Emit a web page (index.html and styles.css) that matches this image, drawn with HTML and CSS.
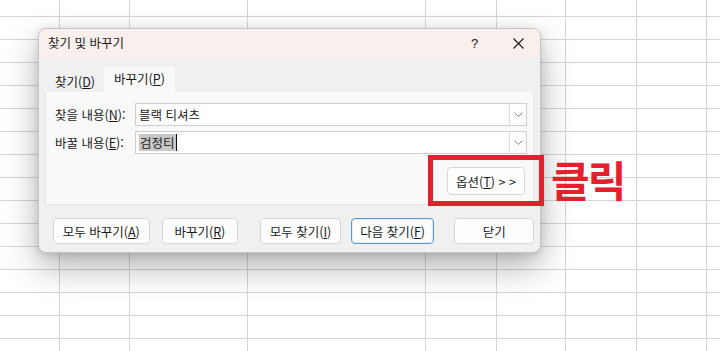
FILE: index.html
```html
<!DOCTYPE html>
<html lang="ko">
<head>
<meta charset="utf-8">
<title>찾기 및 바꾸기</title>
<link rel="stylesheet" href="styles.css">
</head>
<body>
<div class="sheet"></div>

<div class="dialog">
  <div class="titlebar">
    <span class="title">찾기 및 바꾸기</span>
    <span class="help">?</span>
    <span class="close">
      <svg width="11" height="11" viewBox="0 0 11 11"><path d="M0.5 0.5L10.5 10.5M10.5 0.5L0.5 10.5" stroke="#1a1a1a" stroke-width="1.1" fill="none"/></svg>
    </span>
  </div>
  <div class="body">
    <div class="tabs">
      <div class="tab first">찾기(<u>D</u>)</div>
      <div class="tab active">바꾸기(<u>P</u>)</div>
    </div>
    <div class="panel">
      <div class="row">
        <span class="label">찾을 내용(<u>N</u>):</span>
        <div class="combo">
          <span class="value">블랙 티셔츠</span>
          <span class="drop"><svg width="9" height="5" viewBox="0 0 9 5"><path d="M0.5 0.5L4.5 4.5L8.5 0.5" stroke="#8a8a8a" stroke-width="1" fill="none"/></svg></span>
        </div>
      </div>
      <div class="row">
        <span class="label">바꿀 내용(<u>E</u>):</span>
        <div class="combo">
          <span class="value"><span class="sel">검정티</span><span class="caret"></span></span>
          <span class="drop"><svg width="9" height="5" viewBox="0 0 9 5"><path d="M0.5 0.5L4.5 4.5L8.5 0.5" stroke="#8a8a8a" stroke-width="1" fill="none"/></svg></span>
        </div>
      </div>
      <div class="optrow">
        <button class="btn opt">옵션(<u>T</u>) &gt; &gt;</button>
      </div>
    </div>
    <div class="actions">
      <button class="btn b1">모두 바꾸기(<u>A</u>)</button>
      <button class="btn b2">바꾸기(<u>R</u>)</button>
      <button class="btn b3">모두 찾기(<u>I</u>)</button>
      <button class="btn b4 default">다음 찾기(<u>F</u>)</button>
      <button class="btn b5">닫기</button>
    </div>
  </div>
</div>

<div class="mark"></div>
<div class="callout">클릭</div>
</body>
</html>
```

FILE: styles.css
```css
html, body {
  margin: 0;
  padding: 0;
  width: 720px;
  height: 351px;
  overflow: hidden;
}
body {
  position: relative;
  font-family: "Noto Sans CJK KR", "Noto Sans", sans-serif;
  color: #1b1b1b;
  background-color: #ffffff;
}
.sheet {
  position: absolute;
  left: 0;
  top: 0;
  width: 720px;
  height: 351px;
  background-color: #fff;
  background-image:
    linear-gradient(#d5d5d5, #d5d5d5),
    linear-gradient(#d5d5d5, #d5d5d5),
    linear-gradient(#d5d5d5, #d5d5d5),
    linear-gradient(#d5d5d5, #d5d5d5),
    linear-gradient(#d5d5d5, #d5d5d5),
    linear-gradient(#d5d5d5, #d5d5d5),
    linear-gradient(#d5d5d5, #d5d5d5),
    linear-gradient(#d5d5d5, #d5d5d5),
    repeating-linear-gradient(to bottom, transparent 0, transparent 16px, #d5d5d5 16px, #d5d5d5 17px, transparent 17px, transparent 23px);
  background-size: 1px 100%, 1px 100%, 1px 100%, 1px 100%, 1px 100%, 1px 100%, 1px 100%, 1px 100%, 100% 100%;
  background-position: 59px 0, 129px 0, 247px 0, 425px 0, 496px 0, 565px 0, 636px 0, 706px 0, 0 0;
  background-repeat: no-repeat;
}

.dialog {
  position: absolute;
  left: 38px;
  top: 28px;
  width: 503px;
  height: 225px;
  box-sizing: border-box;
  border: 1px solid #c4c4c4;
  border-radius: 8px;
  overflow: hidden;
  background: #f0f0f0;
  box-shadow: 0 14px 34px rgba(0, 0, 0, 0.3), 0 2px 8px rgba(0, 0, 0, 0.12);
}
.titlebar {
  height: 29px;
  background: #f9efec;
  display: flex;
  align-items: center;
  padding-left: 9px;
  font-size: 12.5px;
}
.title {
  flex: 1;
  line-height: 1;
}
.help {
  width: 12px;
  font-size: 13px;
  margin-right: 30px;
  font-family: "Liberation Sans", sans-serif;
}
.close {
  width: 11px;
  height: 11px;
  margin-right: 16px;
  display: flex;
}
.body {
  padding: 9px 6px 0 6px;
}
.tabs {
  display: flex;
  height: 25px;
  font-size: 12.5px;
}
.tab {
  box-sizing: border-box;
  white-space: nowrap;
  flex-shrink: 0;
  display: flex;
  align-items: center;
  padding: 0 0 0 10px;
}
.tab.first {
  width: 59px;
  padding-top: 4px;
}
.tab.active {
  background: #f9f9f9;
  width: 71px;
  padding-bottom: 3px;
}
.panel {
  background: #f9f9f9;
  border: 1px solid #e6e6e6;
  border-top: none;
  height: 113px;
  box-sizing: border-box;
  padding: 11px 6px 0 9px;
}
.row {
  display: flex;
  align-items: center;
  height: 23px;
  margin-bottom: 5px;
  font-size: 12.5px;
}
.label {
  width: 80px;
  white-space: nowrap;
}
.combo {
  flex: 1;
  height: 23px;
  box-sizing: border-box;
  border: 1px solid #cfcfcf;
  background: #fff;
  display: flex;
  align-items: stretch;
}
.value {
  flex: 1;
  display: flex;
  align-items: center;
  padding-left: 3px;
  color: #222;
}
.sel {
  background: #c8c8c8;
  padding: 0 1px;
  line-height: 17px;
}
.caret {
  width: 1px;
  height: 17px;
  background: #111;
}
.drop {
  width: 16px;
  border-left: 1px solid #dcdcdc;
  display: flex;
  align-items: center;
  justify-content: center;
}
.optrow {
  display: flex;
  justify-content: flex-end;
  padding-top: 8px;
  padding-right: 2px;
}
.btn {
  font-family: "Noto Sans CJK KR", "Noto Sans", sans-serif;
  font-size: 12.5px;
  color: #1b1b1b;
  background: #fdfdfd;
  border: 1px solid #d6d6d6;
  border-radius: 4px;
  height: 26px;
  padding: 0;
  white-space: nowrap;
  display: flex;
  align-items: center;
  justify-content: center;
}
.opt {
  width: 78px;
  height: 28px;
}
.actions {
  display: flex;
  padding-top: 13px;
  padding-left: 8px;
}
.b1 { width: 97px; }
.b2 { width: 77px; margin-left: 12px; }
.b3 { width: 81px; margin-left: 22px; }
.b4 { width: 84px; margin-left: 10px; }
.b5 { width: 80px; margin-left: 20px; }
.default {
  border: 1px solid #5b95d2;
  box-shadow: inset 0 0 0 1px #e3eefa;
}

.mark {
  position: absolute;
  left: 428px;
  top: 155px;
  width: 116px;
  height: 51px;
  box-sizing: border-box;
  border: 5px solid #e3202b;
}
.callout {
  position: absolute;
  left: 551px;
  top: 156px;
  font-size: 42px;
  font-weight: 700;
  color: #e3202b;
  line-height: 46px;
  letter-spacing: -2px;
}
```
